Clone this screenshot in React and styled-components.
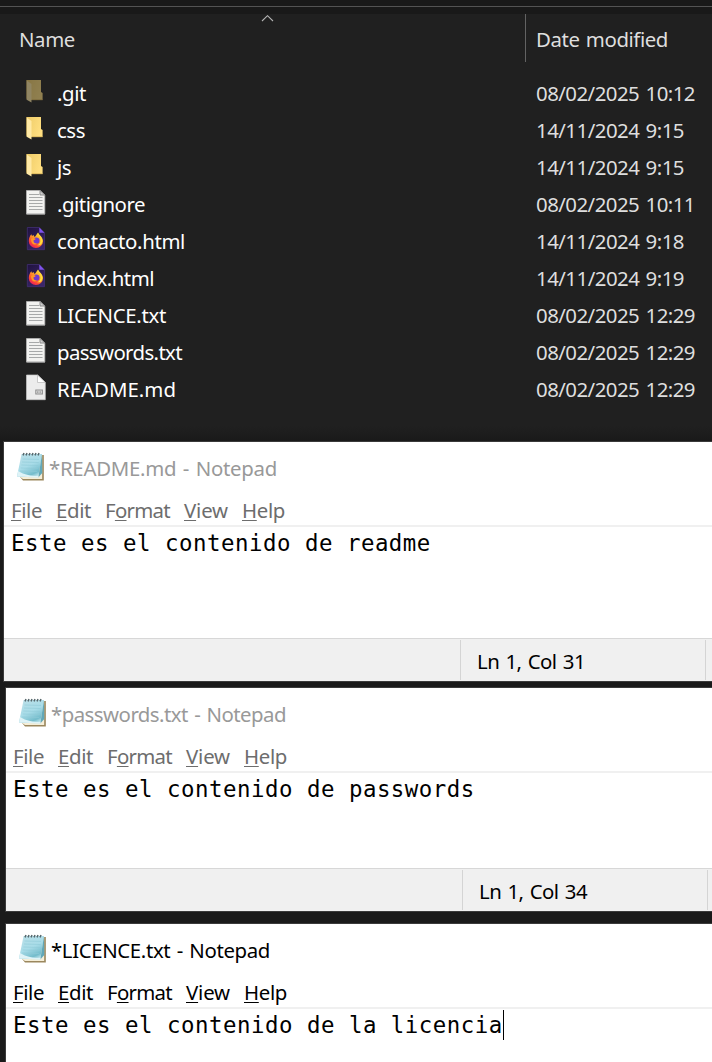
import React, { useLayoutEffect, useRef } from "react";
import styled, { createGlobalStyle } from "styled-components";

const GlobalStyle = createGlobalStyle`
  * { box-sizing: border-box; }
  body {
    margin: 0;
    background: #1a1a1a;
    font-family: "Noto Sans", "Open Sans", sans-serif;
    font-size: 20.4px;
    overflow: hidden;
  }
`;

const Desktop = styled.div`
  width: 712px;
  height: 1062px;
  overflow: hidden;
  background: #1a1a1a;
`;

const Explorer = styled.section`
  height: 442px;
  background: linear-gradient(#202020 0 426px, #191919 442px);
`;

const TopStrip = styled.div`
  height: 14px;
  padding-top: 6px;
  background: #191919;
  &::after {
    content: "";
    display: block;
    height: 1px;
    background: #535353;
  }
`;

const HeaderRow = styled.div`
  position: relative;
  display: grid;
  grid-template-columns: 525px 1fr;
  height: 48px;
  margin-bottom: 13px;
  color: #dedede;
`;

const HeaderCell = styled.div`
  display: flex;
  align-items: center;
  padding: 1px 0 0 ${(p) => (p.$divided ? "10px" : "19px")};
  border-left: ${(p) => (p.$divided ? "1px solid #636363" : "none")};
`;

const SortArrow = styled.svg`
  position: absolute;
  left: 261px;
  top: 0;
`;

const FileRow = styled.div`
  display: grid;
  grid-template-columns: 31px 479px 1fr;
  height: 37px;
  padding-left: 26px;
  align-items: start;
  justify-items: start;
  color: #fff;
`;

const IconSlot = styled.span`
  height: 30px;
  padding-top: 3px;
  opacity: ${(p) => (p.$faded ? 0.5 : 1)};
  svg { display: block; }
`;

const FileCell = styled.span`
  padding-top: 4px;
  color: ${(p) => (p.$muted ? "#dedede" : "#fff")};
`;

const FittedText = styled.span`
  display: block;
  width: max-content;
  white-space: pre;
  word-spacing: 1.5px;
  line-height: 28px;
`;

const Window = styled.section`
  display: flex;
  flex-direction: column;
  height: ${(p) => p.$height}px;
  margin-left: ${(p) => p.$left}px;
  margin-bottom: ${(p) => p.$gap}px;
  background: #fff;
  box-shadow: 0 0 0 1px #3a3a3a;
`;

const TitleBar = styled.header`
  display: flex;
  height: 52px;
  padding: 0 0 0 12px;
  color: ${(p) => (p.$active ? "#000" : "#999")};
  svg { flex: none; margin-top: 9px; }
  span { margin: 12px 0 0 1px; }
`;

const MenuBar = styled.nav`
  display: flex;
  height: 33px;
  padding: 2px 0 0 7px;
  border-bottom: 2px solid #f0f0f0;
  color: ${(p) => (p.$active ? "#000" : "#6d6d6d")};
`;

const MenuItem = styled.div`
  width: ${(p) => p.$width}px;
  flex: none;
`;

const Mnemonic = styled.span`
  text-decoration: underline;
  text-decoration-thickness: 1px;
  text-underline-offset: 2px;
  text-decoration-skip-ink: none;
`;

const Editor = styled.div`
  display: flex;
  flex: 1;
  align-items: flex-start;
  padding: 0 0 0 7px;
  font-family: "DejaVu Sans Mono", "Liberation Mono", monospace;
  font-size: 22.4px;
  letter-spacing: 0.515px;
  line-height: 32px;
  white-space: pre;
  color: #000;
`;

const Caret = styled.i`
  width: 1px;
  height: 30px;
  margin-top: 1px;
  background: #000;
`;

const StatusBar = styled.footer`
  display: grid;
  grid-template-columns: 456px 245px 1fr;
  height: 43px;
  padding: 1px 0;
  border-top: 1px solid #d7d7d7;
  background: #f0f0f0;
  color: #000;
`;

const StatusCell = styled.div`
  padding: 7px 0 0 16px;
  border-left: ${(p) => (p.$plain ? "none" : "1px solid #d4d4d4")};
`;

/* Spreads the letters so that the text takes up the column width it is given. */
function Fit({ width, children }) {
  const ref = useRef(null);
  useLayoutEffect(() => {
    const el = ref.current;
    el.style.letterSpacing = "0px";
    const natural = el.getBoundingClientRect().width;
    el.style.letterSpacing = `${(width - natural) / el.textContent.length}px`;
  }, [width, children]);
  return <FittedText ref={ref}>{children}</FittedText>;
}

function FolderIcon() {
  return (
    <svg width="20" height="26" viewBox="0 0 20 26">
      <defs>
        <linearGradient id="folderBack" x1="0" x2="1" y1="0" y2="0.4">
          <stop offset="0" stopColor="#eecb68" />
          <stop offset="1" stopColor="#ffdf80" />
        </linearGradient>
      </defs>
      <path d="M0.5 2H15V14L16.6 15V22H5.5L0.5 20.5Z" fill="url(#folderBack)" />
      <path d="M5.5 21.5H16.6V22.2H5.5Z" fill="#c9a54a" />
      <path d="M0.7 2.5L5.5 6V24.5L0.7 21.8Z" fill="#ffe9a6" />
      <path d="M0.5 2V21.5" stroke="#b39850" strokeWidth="0.6" />
    </svg>
  );
}

function TextIcon() {
  return (
    <svg width="20" height="28" viewBox="0 0 20 28">
      <path d="M0.5 1.5H14L18.8 6V25H0.5Z" fill="#f2f2f0" stroke="#b5b5b5" strokeWidth="0.8" />
      <path d="M14 1.5V6H18.8Z" fill="#d2d2d2" stroke="#858585" strokeWidth="0.9" />
      <path d="M3 5.5H13M3 8.5H16.5M3 11.5H16.5M3 14.5H16.5M3 17.5H16.5M3 20.5H16.5" stroke="#a7a9a9" />
      <path d="M0.5 25.2H19" stroke="#a2a2a2" strokeWidth="0.9" />
    </svg>
  );
}

function MarkdownIcon() {
  return (
    <svg width="20" height="28" viewBox="0 0 20 28">
      <path d="M0.5 1H11.5L19.3 8.5V25.7H0.5Z" fill="#ececec" stroke="#c9c9c9" strokeWidth="0.7" />
      <path d="M11.5 1V8.5H19.3Z" fill="#fff" stroke="#bdbdbd" strokeWidth="0.8" />
      <rect x="9.8" y="16" width="6.6" height="4" fill="#dedede" stroke="#8d8d8d" />
      <path d="M11.5 17.2V19M13 17.2V19M14.6 17.2V19" stroke="#999" strokeWidth="0.8" />
    </svg>
  );
}

function FirefoxIcon() {
  return (
    <svg width="20" height="28" viewBox="0 0 20 28">
      <defs>
        <linearGradient id="ffPage" x1="0" x2="0.6" y1="0" y2="1">
          <stop offset="0" stopColor="#20123f" />
          <stop offset="1" stopColor="#3a2568" />
        </linearGradient>
        <linearGradient id="ffFlame" x1="0.9" x2="0.2" y1="0" y2="1">
          <stop offset="0" stopColor="#fff04a" />
          <stop offset="0.4" stopColor="#ffaa25" />
          <stop offset="0.7" stopColor="#ff542f" />
          <stop offset="1" stopColor="#e91463" />
        </linearGradient>
      </defs>
      <path d="M1.3 1.5H13.3L18.5 7V23.7H1.3Z" fill="url(#ffPage)" stroke="#45327a" strokeWidth="0.7" />
      <path d="M13.3 1.5V6.8H18.5Z" fill="#8053ee" />
      <path d="M12 6.5C13 9.2 17 11 17 15.2A7.1 6.7 0 0 1 2.8 15.2C2.8 12.1 4 9.8 5.3 8.2L6 10L7.5 9L8.5 11C10 10.4 10.2 8.4 12 6.5Z" fill="url(#ffFlame)" />
      <circle cx="10.3" cy="14.6" r="3.2" fill="#7139ce" />
      <path d="M5 13C7 11.6 8.2 12 9.8 13C9 14 7.7 14 7.4 14.7C7.5 16.3 9 17.8 11 17.5C8.7 19.8 5 18.2 5 13Z" fill="#ff9825" />
      <path d="M12 6.5C12 9.4 15.4 10.6 14.5 15.5C14 18 12.3 19 10.8 19.2C15.2 20 16.5 17 16.3 14.2C16 11 13 9.5 12 6.5Z" fill="#ffdf3e" />
    </svg>
  );
}

function NotepadIcon() {
  return (
    <svg width="32" height="34" viewBox="0 0 32 34">
      <defs>
        <linearGradient id="padSheet" x1="0.2" x2="0.7" y1="0" y2="1">
          <stop offset="0" stopColor="#b9dfe8" />
          <stop offset="0.5" stopColor="#a8dce8" />
          <stop offset="0.85" stopColor="#74bccb" />
          <stop offset="1" stopColor="#c5e8ef" />
        </linearGradient>
      </defs>
      <path d="M8 4H27.8V29.5H7L4.5 26.5Z" fill="#9b875d" />
      <path d="M8 4H26.2V28H7L4 26Z" fill="#f5eed8" />
      <path d="M5.6 3H26L22.3 26.6L1 25.5Z" fill="url(#padSheet)" />
      <path d="M22.3 26.6L26 3L26.3 22Z" fill="#61a8b9" />
      <path d="M1 25.5L2 20C8 24 16 24.8 22.5 25L22.3 26.6Z" fill="#dff3f7" />
      <path d="M6.5 8L23 8.4M6 11L22.7 11.5M5.4 14L22.2 14.5M4.8 17L21.7 17.5M4.2 20L21.3 20.5" stroke="#8fc9d6" strokeWidth="0.6" />
      <path d="M7 4.4L8 2M10 4.4L11 2M13 4.4L14 2M16 4.4L17 2M19 4.4L20 2M22 4.4L23 2" stroke="#56676c" strokeWidth="1.5" />
    </svg>
  );
}

const icons = { folder: FolderIcon, text: TextIcon, markdown: MarkdownIcon, firefox: FirefoxIcon };

const files = [
  { name: ".git", width: 29, icon: "folder", date: "08/02/2025 10:12", faded: true },
  { name: "css", width: 28, icon: "folder", date: "14/11/2024 9:15" },
  { name: "js", width: 14, icon: "folder", date: "14/11/2024 9:15" },
  { name: ".gitignore", width: 88, icon: "text", date: "08/02/2025 10:11" },
  { name: "contacto.html", width: 128, icon: "firefox", date: "14/11/2024 9:18" },
  { name: "index.html", width: 97, icon: "firefox", date: "14/11/2024 9:19" },
  { name: "LICENCE.txt", width: 109, icon: "text", date: "08/02/2025 12:29" },
  { name: "passwords.txt", width: 125, icon: "text", date: "08/02/2025 12:29" },
  { name: "README.md", width: 119, icon: "markdown", date: "08/02/2025 12:29" },
];

const menu = [
  { before: "", key: "F", after: "ile", width: 31, step: 45 },
  { before: "", key: "E", after: "dit", width: 35, step: 49 },
  { before: "F", key: "o", after: "rmat", width: 65, step: 79 },
  { before: "", key: "V", after: "iew", width: 44, step: 58 },
  { before: "", key: "H", after: "elp", width: 43, step: 58 },
];

const windows = [
  { title: "*README.md - Notepad", width: 228, text: "Este es el contenido de readme", status: "Ln 1, Col 31", left: 4, height: 239, gap: 7 },
  { title: "*passwords.txt - Notepad", width: 235, text: "Este es el contenido de passwords", status: "Ln 1, Col 34", left: 6, height: 223, gap: 13 },
  { title: "*LICENCE.txt - Notepad", width: 219, text: "Este es el contenido de la licencia", left: 6, height: 140, gap: 0, active: true },
];

function Notepad({ title, width, text, status, left, height, gap, active }) {
  return (
    <Window $left={left} $height={height} $gap={gap}>
      <TitleBar $active={active}>
        <NotepadIcon />
        <Fit width={width}>{title}</Fit>
      </TitleBar>
      <MenuBar $active={active}>
        {menu.map((m) => (
          <MenuItem key={m.key} $width={m.step}>
            <Fit width={m.width}>
              {m.before}
              <Mnemonic>{m.key}</Mnemonic>
              {m.after}
            </Fit>
          </MenuItem>
        ))}
      </MenuBar>
      <Editor>
        {text}
        {active && <Caret />}
      </Editor>
      {status && (
        <StatusBar>
          <StatusCell $plain />
          <StatusCell>
            <Fit width={108}>{status}</Fit>
          </StatusCell>
          <StatusCell />
        </StatusBar>
      )}
    </Window>
  );
}

export default function App() {
  return (
    <Desktop>
      <GlobalStyle />
      <Explorer>
        <TopStrip />
        <HeaderRow>
          <HeaderCell>
            <Fit width={56}>Name</Fit>
          </HeaderCell>
          <HeaderCell $divided>
            <Fit width={132}>Date modified</Fit>
          </HeaderCell>
          <SortArrow width="13" height="9" viewBox="0 0 13 9">
            <path d="M1 7L6.5 1.7L12 7" fill="none" stroke="#b5b5b5" strokeWidth="1.1" />
          </SortArrow>
        </HeaderRow>
        {files.map((f) => {
          const Icon = icons[f.icon];
          return (
            <FileRow key={f.name}>
              <IconSlot $faded={f.faded}>
                <Icon />
              </IconSlot>
              <FileCell>
                <Fit width={f.width}>{f.name}</Fit>
              </FileCell>
              <FileCell $muted>
                <Fit width={f.date.length === 16 ? 159 : 148}>{f.date}</Fit>
              </FileCell>
            </FileRow>
          );
        })}
      </Explorer>
      {windows.map((w) => (
        <Notepad key={w.title} {...w} />
      ))}
    </Desktop>
  );
}
